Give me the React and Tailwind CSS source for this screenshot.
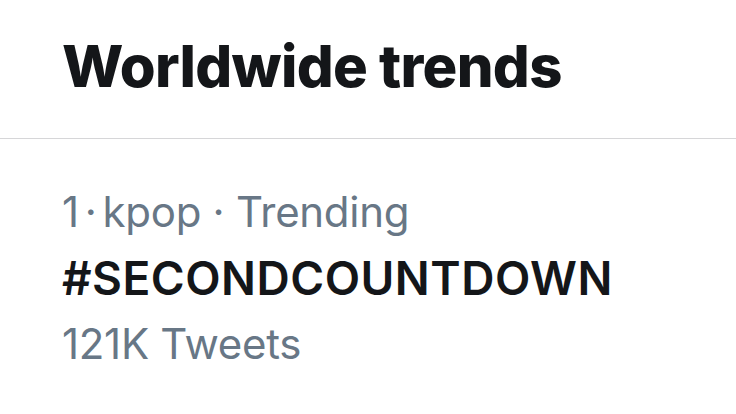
import React from "react";

const trend = {
  rank: 1,
  category: "kpop",
  name: "#SECONDCOUNTDOWN",
  tweets: "121K Tweets",
};

export default function App() {
  return (
    <div
      className="w-[736px] h-[414px] bg-white overflow-hidden"
      style={{ fontFamily: "Inter, 'Liberation Sans', sans-serif" }}
    >
      <div className="h-[139px] border-b border-[#d6d6d8] pl-[62px] pt-[37px]">
        <h1 className="text-[58px] leading-none font-extrabold text-[#141619] tracking-[-0.7px]">
          Worldwide trends
        </h1>
      </div>

      <div className="pl-[62px] pt-[40px] text-[42px] leading-[66px]">
        <p className="text-[#687786] tracking-[-0.3px]">
          {trend.rank}
          <span className="mx-[6px]">·</span>
          {trend.category} · Trending
        </p>
        <p className="font-semibold text-[#141619] text-[46px] tracking-[0.5px]">
          {trend.name}
        </p>
        <p className="text-[#687786] tracking-[-0.3px]">{trend.tweets}</p>
      </div>
    </div>
  );
}
